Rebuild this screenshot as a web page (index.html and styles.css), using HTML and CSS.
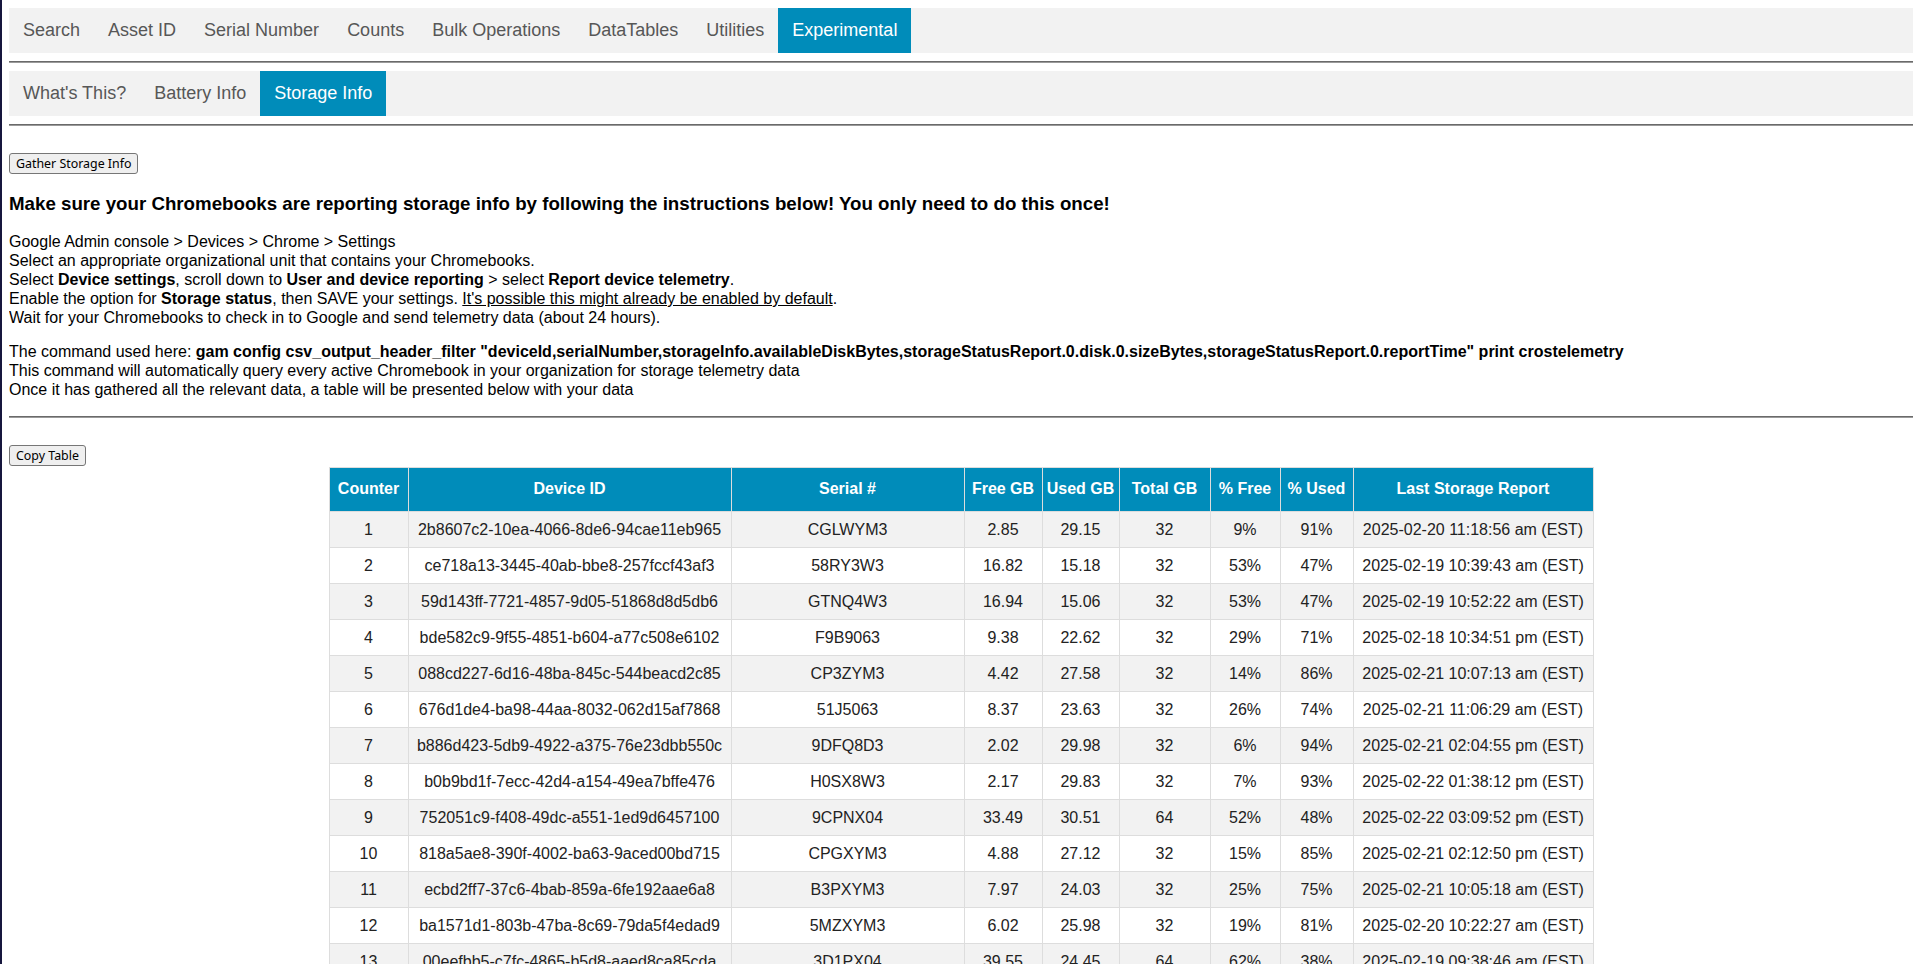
FILE: index.html
```html
<!DOCTYPE html>
<html>
<head>
<meta charset="utf-8">
<title>Storage Info</title>
<link rel="stylesheet" href="styles.css">
</head>
<body>
<div class="topnav">
  <a>Search</a><a>Asset ID</a><a>Serial Number</a><a>Counts</a><a>Bulk Operations</a><a>DataTables</a><a>Utilities</a><a class="active">Experimental</a>
</div>
<hr class="rule">
<div class="topnav">
  <a>What's This?</a><a>Battery Info</a><a class="active">Storage Info</a>
</div>
<hr class="rule">
<div class="content">
  <button class="btn gather">Gather Storage Info</button>
  <h3 class="notice">Make sure your Chromebooks are reporting storage info by following the instructions below! You only need to do this once!</h3>
  <div class="steps">
    Google Admin console &gt; Devices &gt; Chrome &gt; Settings<br>
    Select an appropriate organizational unit that contains your Chromebooks.<br>
    Select <b>Device settings</b>, scroll down to <b>User and device reporting</b> &gt; select <b>Report device telemetry</b>.<br>
    Enable the option for <b>Storage status</b>, then SAVE your settings. <u>It's possible this might already be enabled by default</u>.<br>
    Wait for your Chromebooks to check in to Google and send telemetry data (about 24 hours).
  </div>
  <div class="command">
    The command used here: <b>gam config csv_output_header_filter "deviceId,serialNumber,storageInfo.availableDiskBytes,storageStatusReport.0.disk.0.sizeBytes,storageStatusReport.0.reportTime" print crostelemetry</b><br>
    This command will automatically query every active Chromebook in your organization for storage telemetry data<br>
    Once it has gathered all the relevant data, a table will be presented below with your data
  </div>
  <hr class="rule sep">
  <button class="btn copy">Copy Table</button>
  <table class="data">
    <colgroup>
      <col class="c-counter"><col class="c-device"><col class="c-serial"><col class="c-free"><col class="c-used"><col class="c-total"><col class="c-pfree"><col class="c-pused"><col class="c-last">
    </colgroup>
    <thead>
      <tr><th>Counter</th><th>Device ID</th><th>Serial #</th><th>Free GB</th><th>Used GB</th><th>Total GB</th><th>% Free</th><th>% Used</th><th>Last Storage Report</th></tr>
    </thead>
    <tbody>
      <tr><td>1</td><td>2b8607c2-10ea-4066-8de6-94cae11eb965</td><td>CGLWYM3</td><td>2.85</td><td>29.15</td><td>32</td><td>9%</td><td>91%</td><td>2025-02-20 11:18:56 am (EST)</td></tr>
      <tr><td>2</td><td>ce718a13-3445-40ab-bbe8-257fccf43af3</td><td>58RY3W3</td><td>16.82</td><td>15.18</td><td>32</td><td>53%</td><td>47%</td><td>2025-02-19 10:39:43 am (EST)</td></tr>
      <tr><td>3</td><td>59d143ff-7721-4857-9d05-51868d8d5db6</td><td>GTNQ4W3</td><td>16.94</td><td>15.06</td><td>32</td><td>53%</td><td>47%</td><td>2025-02-19 10:52:22 am (EST)</td></tr>
      <tr><td>4</td><td>bde582c9-9f55-4851-b604-a77c508e6102</td><td>F9B9063</td><td>9.38</td><td>22.62</td><td>32</td><td>29%</td><td>71%</td><td>2025-02-18 10:34:51 pm (EST)</td></tr>
      <tr><td>5</td><td>088cd227-6d16-48ba-845c-544beacd2c85</td><td>CP3ZYM3</td><td>4.42</td><td>27.58</td><td>32</td><td>14%</td><td>86%</td><td>2025-02-21 10:07:13 am (EST)</td></tr>
      <tr><td>6</td><td>676d1de4-ba98-44aa-8032-062d15af7868</td><td>51J5063</td><td>8.37</td><td>23.63</td><td>32</td><td>26%</td><td>74%</td><td>2025-02-21 11:06:29 am (EST)</td></tr>
      <tr><td>7</td><td>b886d423-5db9-4922-a375-76e23dbb550c</td><td>9DFQ8D3</td><td>2.02</td><td>29.98</td><td>32</td><td>6%</td><td>94%</td><td>2025-02-21 02:04:55 pm (EST)</td></tr>
      <tr><td>8</td><td>b0b9bd1f-7ecc-42d4-a154-49ea7bffe476</td><td>H0SX8W3</td><td>2.17</td><td>29.83</td><td>32</td><td>7%</td><td>93%</td><td>2025-02-22 01:38:12 pm (EST)</td></tr>
      <tr><td>9</td><td>752051c9-f408-49dc-a551-1ed9d6457100</td><td>9CPNX04</td><td>33.49</td><td>30.51</td><td>64</td><td>52%</td><td>48%</td><td>2025-02-22 03:09:52 pm (EST)</td></tr>
      <tr><td>10</td><td>818a5ae8-390f-4002-ba63-9aced00bd715</td><td>CPGXYM3</td><td>4.88</td><td>27.12</td><td>32</td><td>15%</td><td>85%</td><td>2025-02-21 02:12:50 pm (EST)</td></tr>
      <tr><td>11</td><td>ecbd2ff7-37c6-4bab-859a-6fe192aae6a8</td><td>B3PXYM3</td><td>7.97</td><td>24.03</td><td>32</td><td>25%</td><td>75%</td><td>2025-02-21 10:05:18 am (EST)</td></tr>
      <tr><td>12</td><td>ba1571d1-803b-47ba-8c69-79da5f4edad9</td><td>5MZXYM3</td><td>6.02</td><td>25.98</td><td>32</td><td>19%</td><td>81%</td><td>2025-02-20 10:22:27 am (EST)</td></tr>
      <tr><td>13</td><td>00eefbb5-c7fc-4865-b5d8-aaed8ca85cda</td><td>3D1PX04</td><td>39.55</td><td>24.45</td><td>64</td><td>62%</td><td>38%</td><td>2025-02-19 09:38:46 am (EST)</td></tr>
    </tbody>
  </table>
</div>
</body>
</html>
```
FILE: styles.css
```css
html {
  scrollbar-width: none;
}
html::-webkit-scrollbar {
  display: none;
}
body {
  margin: 8px 8px 8px 9px;
  font-family: "Liberation Sans", Arial, sans-serif;
  font-size: 16px;
  color: #000;
  background: #fff;
}
body::before {
  content: "";
  position: fixed;
  left: 0;
  top: 0;
  bottom: 0;
  width: 2px;
  background: #16163d;
}
.topnav {
  display: flex;
  background: #f2f2f2;
}
.topnav a {
  display: block;
  padding: 12px 14px;
  font-size: 18px;
  line-height: 21px;
  color: #575757;
  text-decoration: none;
}
.topnav a.active {
  background: #008cba;
  color: #fff;
}
.rule {
  margin: 8px 0;
  border: 0;
  border-top: 1px solid #6a6a6a;
  border-bottom: 1px solid #9a9a9a;
  height: 0;
}
.content {
  padding-top: 19px;
}
.btn {
  display: block;
  font-family: "Noto Sans", "Open Sans", sans-serif;
  font-size: 12.4px;
  line-height: 17px;
  height: 21px;
  padding: 1px 6px;
  color: #000;
  background: #efefef;
  border: 1px solid #767676;
  border-radius: 3px;
}
.notice {
  font-size: 18.72px;
  font-weight: bold;
  margin: 19px 0 17px;
}
.steps {
  line-height: 19px;
}
.command {
  margin-top: 15px;
  line-height: 19px;
}
.sep {
  margin-top: 17px;
  margin-bottom: 27px;
}
.copy {
  margin-bottom: 1px;
}
.data {
  border-collapse: collapse;
  table-layout: fixed;
  width: 1264px;
  margin: 0 auto;
  color: #222;
}
.c-counter { width: 79px; }
.c-device { width: 323px; }
.c-serial { width: 233px; }
.c-free { width: 78px; }
.c-used { width: 77px; }
.c-total { width: 91px; }
.c-pfree { width: 70px; }
.c-pused { width: 73px; }
.c-last { width: 240px; }
.data th {
  background: #008cba;
  color: #fff;
  font-weight: bold;
  padding: 12px 4px 13px;
  line-height: 18px;
  border: 1px solid #ddd;
  text-align: center;
}
.data td {
  padding: 8px 4px;
  line-height: 19px;
  border: 1px solid #ddd;
  text-align: center;
}
.data tbody tr:nth-child(odd) {
  background: #f2f2f2;
}
.data tbody tr:nth-child(even) {
  background: #fff;
}
```
